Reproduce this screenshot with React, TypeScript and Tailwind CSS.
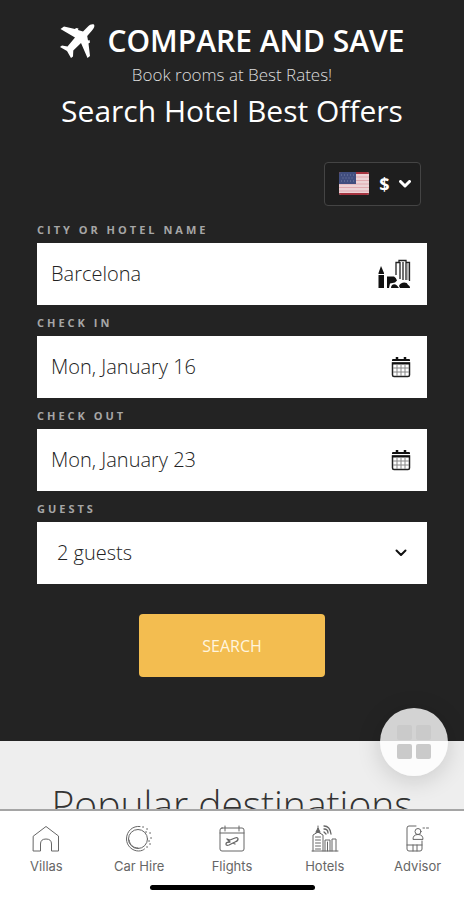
import React from "react";

const ink = { fill: "none", stroke: "currentColor", strokeLinecap: "round", strokeLinejoin: "round" } as const;

function PlaneIcon() {
  return (
    <svg viewBox="0 0 36 36" className="h-9 w-9 text-white" fill="currentColor" aria-hidden="true">
      <path d="M35 1.500c-2-.8-4 0-6 2L24 8.500 19 7l.5-1.500-2.500-.5-1 1L5 3.500 1.500 6 16 14.500 8.500 23.500 3 22.500 1 24l7 4 4 7 2-1.500.3-6L22 20l6.500 15 2.500-2-1.500-12.500 1.500-1-.5-2.500-1.500.5-.8-4.500L33 7.500C35 5 36 3 35 1.500z" />
    </svg>
  );
}

function FlagIcon() {
  return (
    <svg viewBox="0 0 32 24" className="h-6 w-8" aria-hidden="true">
      <clipPath id="flag"><rect x="1" y="0" width="30" height="23" rx="2" /></clipPath>
      <g clipPath="url(#flag)">
        <rect width="32" height="24" fill="#ecd3d6" />
        <path d="M0 1h32M0 22h32" stroke="#a5333f" strokeWidth="2" />
        <path d="M0 5h32M0 8.500h32M0 12h32M0 15.500h32M0 19h32" stroke="#dfa9af" strokeWidth="1.200" />
        <rect width="18" height="12" fill="#414e7f" />
        <path d="M3 3h14M4.500 6h12M3 9h14" stroke="#7780a6" strokeWidth="1" strokeDasharray="1 2" />
      </g>
    </svg>
  );
}

function CityIcon() {
  return (
    <svg viewBox="0 0 34 30" className="h-[30px] w-[34px]" fill="#111" aria-hidden="true">
      <path d="M1.500 29V14L4 7l3 7v15z" />
      <path d="M1 15.500h6.500" stroke="#fff" strokeWidth="1" />
      <path d="M10 29V17.500h7q2 1 3 4l-2 2-5 1-1 4.500z" />
      <path d="M14 29c0-3 3-5 6-2.500l2 2.500zM22 27c1-4 8-5 9-1 1.500.5 2 1.500 2 3H23z" />
      <path d="M19 16V3.500h3V1.500h7v2h3.500V22M23 3v17M26 3v18M29 3v18" fill="none" stroke="#222" strokeWidth="1.300" />
      <path d="M31 4v17" stroke="#999" strokeWidth="1.500" />
    </svg>
  );
}

function CalendarIcon() {
  return (
    <svg viewBox="0 0 20 22" className="h-[22px] w-5" aria-hidden="true">
      <path d="M6 1v4M14 1v4" stroke="#111" strokeWidth="2.500" />
      <path d="M1 5V4q0-1 1-1h16q1 0 1 1v1z" fill="#111" />
      <path d="M1.500 7h17v12q0 1.500-1.500 1.500H3q-1.500 0-1.500-1.500z" fill="#fff" stroke="#222" strokeWidth="1.500" />
      <path d="M1 7.500h18" stroke="#111" strokeWidth="2" />
      <path d="M6 8v12M10 8v12M14 8v12M2 12h16M2 16h16" stroke="#888" strokeWidth="1" />
    </svg>
  );
}

function Chevron({ className }: { className: string }) {
  return (
    <svg viewBox="0 0 12 8" className={className} {...ink} aria-hidden="true">
      <path d="M1.500 1.500L6 6l4.500-4.500" />
    </svg>
  );
}

function Field({ id, label, value, children }: { id: string; label: string; value: string; children: React.ReactNode }) {
  return (
    <div className="pb-[9px]">
      <label htmlFor={id} className="mb-1 block text-[11px] leading-[18px] font-bold tracking-[3px] text-[#a6a6a6]">{label}</label>
      <div className="flex h-[62px] items-center bg-white pr-4 pl-[14px]">
        <input id={id} defaultValue={value} className="min-w-0 flex-1 bg-transparent text-xl font-light text-[#222] outline-none" />
        {children}
      </div>
    </div>
  );
}

const tabs = [
  {
    label: "Villas",
    icon: <path d="M1.500 11L14 1.500 26.500 11v15h-7V19q0-5-5.500-5t-5.500 5v7H1.500z" />,
  },
  {
    label: "Car Hire",
    icon: (
      <>
        <circle cx="13" cy="14" r="9.500" />
        <path d="M15 1.500C8 .5 1.500 6 1.500 14c0 7 6 12 12 12 3 0 5-1 6-2M4 15c1 5 4 8 9 8" />
        <path d="M18 2h.1M22 4h.1M21 7h.1M25 8h.1M26 13h.1M24 16h.1M25 19h.1M22 22h.1" strokeWidth="1.600" />
      </>
    ),
  },
  {
    label: "Flights",
    icon: (
      <>
        <path d="M4 3h20q2 0 2 2v19q0 2-2 2H4q-2 0-2-2V5q0-2 2-2zM2 8h24M7 1v5M21 1v5" />
        <path d="M9 14l3 1 5-2q3-1 3 1t-3 3l-6 3q-3 1-3-1t4-2M9 14l3 3M15 18l2 1" strokeWidth="1.300" />
      </>
    ),
  },
  {
    label: "Hotels",
    icon: (
      <>
        <path d="M2 26V10l5-3 5 3v16M7 1v5M4.500 12h5M4.500 15h5M4.500 18h5M4.500 21h5M4.500 24h5M1 26h26M14 26V15h5v11M21 26V14h4v12M16.500 17v9" />
        <path d="M5 7l2-4 2 4z" fill="currentColor" />
        <path d="M13 1q6 0 7 8M13 4q4 0 4 4M13 7l2 2" strokeWidth="1.300" />
      </>
    ),
  },
  {
    label: "Advisor",
    icon: (
      <>
        <path d="M12 1H5Q3 1 3 3v21q0 2 2 2h11q2 0 2-2v-8M3 20h15M9 20v6M13 20v6" />
        <circle cx="14" cy="6.500" r="3" />
        <path d="M9 14q0-4.500 5-4.500t5 4.500zM19 3h1.500M22.500 3h2" />
      </>
    ),
  },
];

export default function App() {
  return (
    <div className="relative flex h-screen flex-col overflow-hidden bg-[#eee] font-['Open_Sans',sans-serif]">
      <main className="min-h-0 flex-1 overflow-hidden">
        <section className="bg-[#232323] px-[37px] pt-[23px] pb-16">
          <header className="text-center text-white">
            <div className="flex items-center justify-center gap-3">
              <PlaneIcon />
              <h1 className="text-[30px] leading-9 font-semibold whitespace-nowrap">COMPARE AND SAVE</h1>
            </div>
            <p className="mt-1 text-[17px] leading-6 font-light text-[#ddd]">Book rooms at Best Rates!</p>
            <h2 className="mt-1 text-[30px] leading-10 whitespace-nowrap">Search Hotel Best Offers</h2>
          </header>
          <div className="mt-[31px] mb-[15px] flex justify-end pr-[6px]">
            <button aria-label="Currency: US dollar" className="flex h-11 w-[97px] items-center justify-between rounded border border-[#444] bg-[#1e1e1e] pr-[9px] pl-[13px] text-lg font-bold text-white">
              <FlagIcon />
              <span>$</span>
              <Chevron className="h-2 w-3 stroke-[3]" />
            </button>
          </div>
          <form onSubmit={(e) => e.preventDefault()}>
            <Field id="city" label="CITY OR HOTEL NAME" value="Barcelona"><CityIcon /></Field>
            <Field id="checkin" label="CHECK IN" value="Mon, January 16"><CalendarIcon /></Field>
            <Field id="checkout" label="CHECK OUT" value="Mon, January 23"><CalendarIcon /></Field>
            <label htmlFor="guests" className="mb-1 block text-[11px] leading-[18px] font-bold tracking-[3px] text-[#a6a6a6]">GUESTS</label>
            <div className="flex h-[62px] items-center bg-white pr-5 pl-5">
              <select id="guests" defaultValue="2" className="min-w-0 flex-1 appearance-none bg-transparent text-xl font-light text-[#222] outline-none">
                <option value="1">1 guest</option>
                <option value="2">2 guests</option>
                <option value="3">3 guests</option>
              </select>
              <Chevron className="h-2 w-3 stroke-2 text-[#111]" />
            </div>
            <button type="submit" className="mx-auto mt-[30px] block h-[63px] w-[186px] rounded bg-[#f3bd50] text-base text-[#fff5df]">SEARCH</button>
          </form>
        </section>
        <section className="bg-[#eee] pt-9 text-center">
          <h2 className="text-[39px] leading-[54px] font-light whitespace-nowrap text-[#333]">Popular destinations</h2>
        </section>
      </main>
      <button aria-label="Open menu" className="absolute right-4 bottom-[124px] grid h-[68px] w-[68px] grid-cols-[15px_15px] place-content-center gap-1 rounded-full bg-white/80 shadow-[0_4px_24px_rgba(0,0,0,0.16)]">
        <span className="h-[15px] rounded-xs bg-[#cacaca]" />
        <span className="h-[15px] rounded-xs bg-[#cacaca]" />
        <span className="h-[15px] rounded-xs bg-[#cacaca]" />
        <span className="h-[15px] rounded-xs bg-[#cacaca]" />
      </button>
      <nav className="relative h-[91px] shrink-0 border-t-2 border-[#a5a5a5] bg-white pt-[14px] font-['Inter',sans-serif]">
        <div className="grid grid-cols-5">
          {tabs.map((tab) => (
            <a key={tab.label} href="#" className="flex flex-col items-center gap-1 text-[13px] leading-[18px] text-[#666]">
              <svg viewBox="0 0 28 28" className="h-7 w-7 text-[#666]" {...ink} aria-hidden="true">{tab.icon}</svg>
              {tab.label}
            </a>
          ))}
        </div>
        <div className="mx-auto mt-[10px] h-[5px] w-[165px] rounded-full bg-black" />
      </nav>
    </div>
  );
}
